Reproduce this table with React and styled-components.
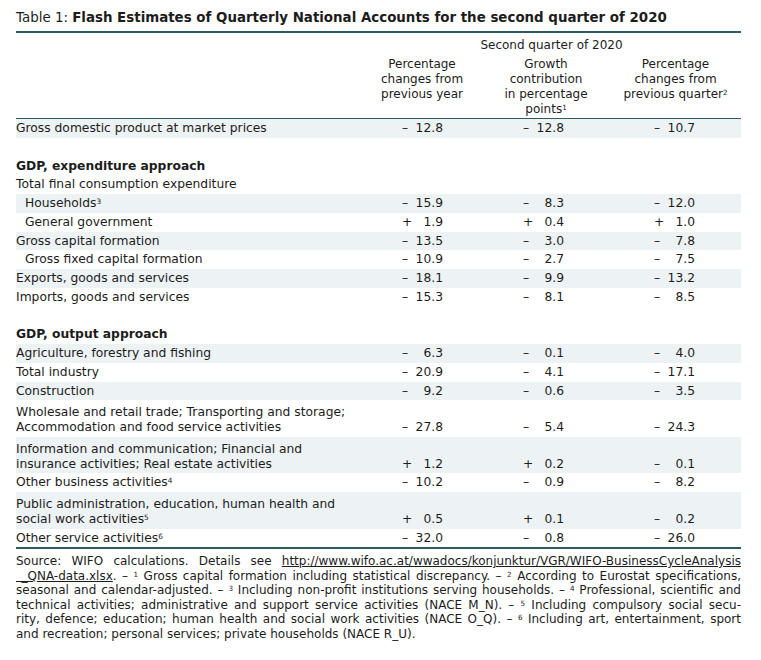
import React from 'react';
import styled, { createGlobalStyle } from 'styled-components';

const GlobalStyle = createGlobalStyle`
  html, body { margin: 0; padding: 0; background: #fff; }
  body { font-family: "DejaVu Sans", sans-serif; color: #1c1c1c; }
`;

const COLS = '346px 120px 128px 131px';
const LINE = '#2b5a62';

const Page = styled.div`
  width: 725px;
  padding: 0 20px 0 16px;
`;

const Title = styled.h1`
  margin: 0;
  padding: 9px 0 4px;
  font-size: 13.4px;
  line-height: 18px;
  font-weight: normal;
  white-space: nowrap;
  border-bottom: 2px solid ${LINE};
  b { font-weight: bold; }
`;

const Head = styled.div`
  display: grid;
  grid-template-columns: ${COLS};
  padding: 4.5px 0 1.5px;
  font-size: 12px;
  line-height: 15px;
  border-bottom: 1px solid ${LINE};
`;

const Span = styled.div`
  grid-column: 2 / 5;
  text-align: center;
`;

const ColHead = styled.div`
  grid-row: 2;
  grid-column: ${p => p.$col};
  margin-top: 4px;
  text-align: center;
`;

const Body = styled.div`
  border-bottom: 2px solid ${LINE};
  font-size: 12.3px;
`;

const Row = styled.div`
  display: grid;
  grid-template-columns: ${COLS};
  align-items: end;
  padding: ${p => (p.$tall ? '4.75px' : '2px')} 0 1.75px;
  line-height: 15px;
  background: ${p => (p.$shade ? '#edf2f4' : 'transparent')};
  font-weight: ${p => (p.$bold ? 'bold' : 'normal')};
`;

const Gap = styled.div`
  height: 18.75px;
`;

const Label = styled.div`
  padding-left: ${p => (p.$indent ? '9px' : '0')};
  white-space: nowrap;
`;

const Num = styled.div`
  display: flex;
  justify-content: space-between;
  width: 41px;
  margin-left: ${p => p.$left}px;
`;

const Sup = styled.sup`
  font-size: 0.6em;
  line-height: 0;
  vertical-align: 0.45em;
`;

const Notes = styled.div`
  margin-top: 5px;
  font-size: 12px;
  line-height: 14.5px;
`;

const NoteLine = styled.div`
  white-space: nowrap;
  text-align: justify;
  text-align-last: ${p => (p.$last ? 'left' : 'justify')};
`;

const Link = styled.span`
  text-decoration: underline;
`;

const OFFSETS = [40, 41, 44];

const rows = [
  { label: 'Gross domestic product at market prices', shade: true, v: ['– 12.8', '– 12.8', '– 10.7'] },
  { gap: true },
  { label: 'GDP, expenditure approach', bold: true },
  { label: 'Total final consumption expenditure' },
  { label: 'Households', sup: '3', indent: true, shade: true, v: ['– 15.9', '– 8.3', '– 12.0'] },
  { label: 'General government', indent: true, v: ['+ 1.9', '+ 0.4', '+ 1.0'] },
  { label: 'Gross capital formation', shade: true, v: ['– 13.5', '– 3.0', '– 7.8'] },
  { label: 'Gross fixed capital formation', indent: true, v: ['– 10.9', '– 2.7', '– 7.5'] },
  { label: 'Exports, goods and services', shade: true, v: ['– 18.1', '– 9.9', '– 13.2'] },
  { label: 'Imports, goods and services', v: ['– 15.3', '– 8.1', '– 8.5'] },
  { gap: true },
  { label: 'GDP, output approach', bold: true },
  { label: 'Agriculture, forestry and fishing', shade: true, v: ['– 6.3', '– 0.1', '– 4.0'] },
  { label: 'Total industry', v: ['– 20.9', '– 4.1', '– 17.1'] },
  { label: 'Construction', shade: true, v: ['– 9.2', '– 0.6', '– 3.5'] },
  { label: ['Wholesale and retail trade; Transporting and storage;', 'Accommodation and food service activities'], v: ['– 27.8', '– 5.4', '– 24.3'] },
  { label: ['Information and communication; Financial and', 'insurance activities; Real estate activities'], shade: true, v: ['+ 1.2', '+ 0.2', '– 0.1'] },
  { label: 'Other business activities', sup: '4', v: ['– 10.2', '– 0.9', '– 8.2'] },
  { label: ['Public administration, education, human health and', 'social work activities'], sup: '5', shade: true, v: ['+ 0.5', '+ 0.1', '– 0.2'] },
  { label: 'Other service activities', sup: '6', v: ['– 32.0', '– 0.8', '– 26.0'] },
];

function Value({ text, left }) {
  const [sign, num] = text.split(' ');
  return (
    <Num $left={left}>
      <span>{sign}</span>
      <span>{num}</span>
    </Num>
  );
}

function TableRow({ row }) {
  const lines = Array.isArray(row.label) ? row.label : [row.label];
  return (
    <Row $shade={row.shade} $bold={row.bold} $tall={lines.length > 1}>
      <Label $indent={row.indent}>
        {lines.map((l, i) => (
          <React.Fragment key={i}>
            {i > 0 && <br />}
            {l}
          </React.Fragment>
        ))}
        {row.sup && <Sup>{row.sup}</Sup>}
      </Label>
      {row.v && row.v.map((t, i) => <Value key={i} text={t} left={OFFSETS[i]} />)}
    </Row>
  );
}

export default function App() {
  return (
    <>
      <GlobalStyle />
      <Page>
        <Title>
          Table 1: <b>Flash Estimates of Quarterly National Accounts for the second quarter of 2020</b>
        </Title>
        <Head>
          <Span>Second quarter of 2020</Span>
          <ColHead $col={2}>Percentage<br />changes from<br />previous year</ColHead>
          <ColHead $col={3}>Growth<br />contribution<br />in percentage<br />points<Sup>1</Sup></ColHead>
          <ColHead $col={4}>Percentage<br />changes from<br />previous quarter<Sup>2</Sup></ColHead>
        </Head>
        <Body>
          {rows.map((r, i) => (r.gap ? <Gap key={i} /> : <TableRow key={i} row={r} />))}
        </Body>
        <Notes>
          <NoteLine>
            Source: WIFO calculations. Details see <Link>http://www.wifo.ac.at/wwadocs/konjunktur/VGR/WIFO-BusinessCycleAnalysis</Link>
          </NoteLine>
          <NoteLine>
            <Link>&nbsp;_QNA-data.xlsx</Link>. – <Sup>1</Sup> Gross capital formation including statistical discrepancy. – <Sup>2</Sup> According to Eurostat specifications,
          </NoteLine>
          <NoteLine>
            seasonal and calendar-adjusted. – <Sup>3</Sup> Including non-profit institutions serving households. – <Sup>4</Sup> Professional, scientific and
          </NoteLine>
          <NoteLine>
            technical activities; administrative and support service activities (NACE M_N). – <Sup>5</Sup> Including compulsory social secu-
          </NoteLine>
          <NoteLine>
            rity, defence; education; human health and social work activities (NACE O_Q). – <Sup>6</Sup> Including art, entertainment, sport
          </NoteLine>
          <NoteLine $last>
            and recreation; personal services; private households (NACE R_U).
          </NoteLine>
        </Notes>
      </Page>
    </>
  );
}
